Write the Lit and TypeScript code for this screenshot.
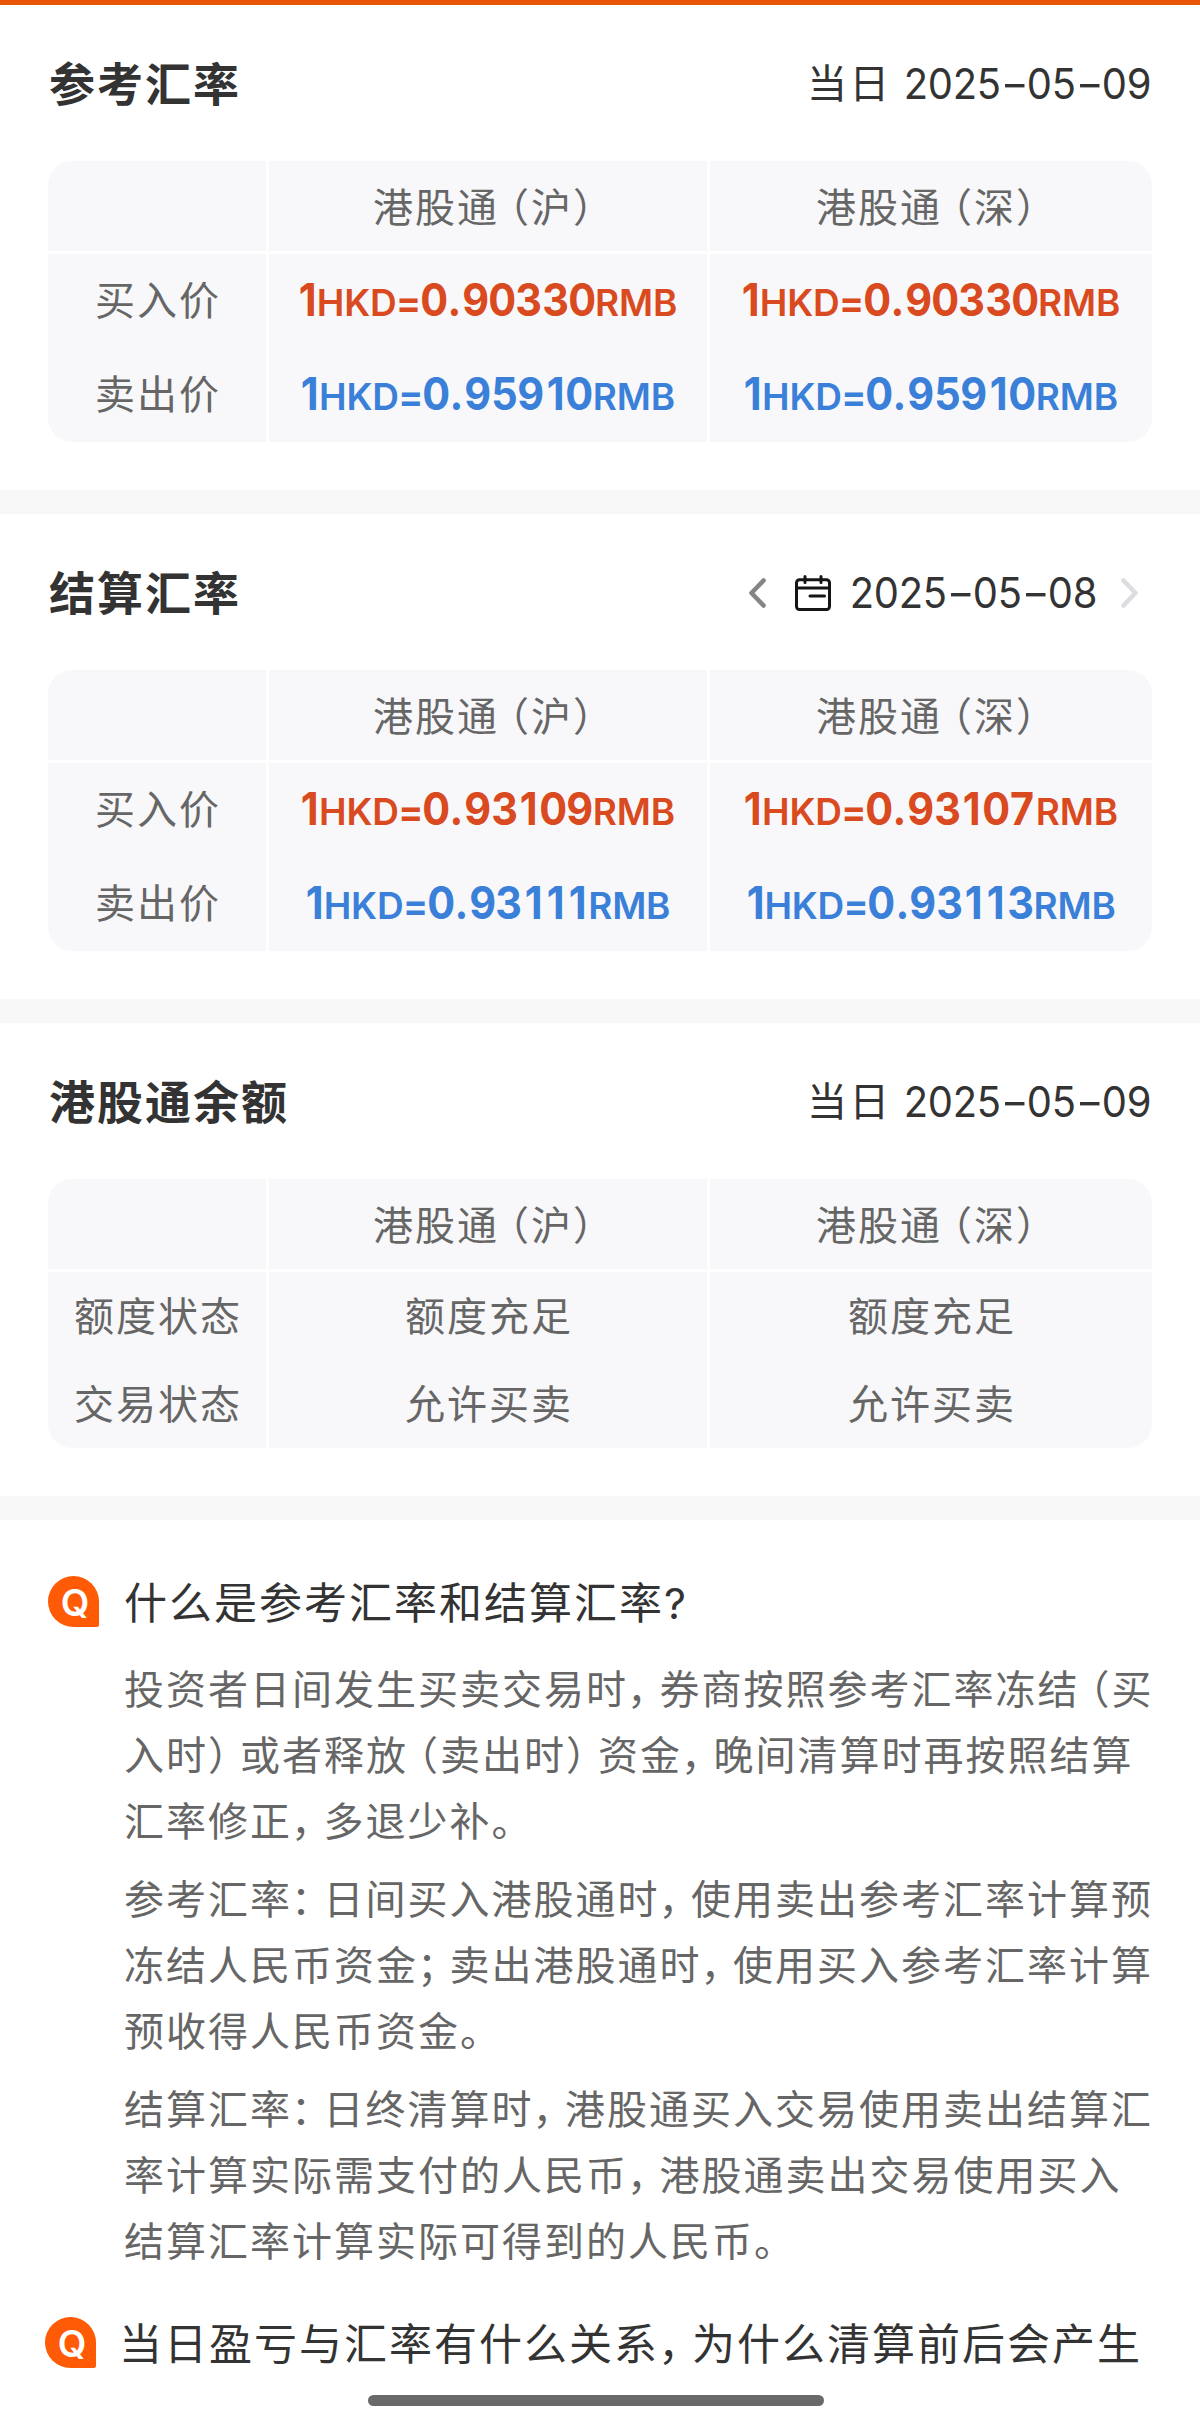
import { LitElement, html, css, svg } from "lit";
import { customElement, property } from "lit/decorators.js";

type Rate = { value: string; tone: "buy" | "sell" };
type Cell = string | Rate;
type Row = { label: string; cells: Cell[] };

const fontStack = css`"Inter", "Noto Sans CJK SC", sans-serif`;

/** Tightens full-width punctuation so that it takes about three quarters of a cell. */
const typeset = (text: string) =>
  text.split(/([（，：；。）])/).map((part) => {
    if (part === "（") return html`<span class="open">${part}</span>`;
    if (part === "）" || part === "。") return html`<span class="close">${part}</span>`;
    if (part.length === 1 && "，：；".includes(part)) return html`<span class="mid">${part}</span>`;
    return part;
  });

const shared = css`
  * { box-sizing: border-box; }
  .open, .close, .mid { font-feature-settings: "halt"; }
  .open { margin-left: 10px; }
  .close { margin-right: 10px; }
  .mid { margin-left: -1px; margin-right: 10.5px; }
`;

@customElement("date-text")
class DateText extends LitElement {
  @property() value = "";
  static styles = css`
    :host { display: flex; color: #333; font: 400 42px/60px ${fontStack}; letter-spacing: 0; white-space: nowrap; }
    .num { width: 24.4px; display: flex; justify-content: center; }
    .num span { transform: scaleX(0.95); }
    .dash { width: 26px; display: flex; justify-content: center; }
    .dash span { transform: scaleX(1.45); }
  `;
  render() {
    return [...this.value].map((c) => html`<span class=${c === "-" ? "dash" : "num"}><span>${c}</span></span>`);
  }
}

@customElement("rate-text")
class RateText extends LitElement {
  @property() value = "";
  @property() tone = "buy";
  static styles = css`
    :host { display: block; font: 700 45px/60px ${fontStack}; letter-spacing: 0; white-space: nowrap; }
    .rate { display: flex; align-items: baseline; }
    .buy { color: #d94a20; }
    .sell { color: #3b80d8; }
    .digit { width: 26.6px; display: flex; justify-content: center; }
    .digit span { transform: scaleX(0.92); }
    .digit.one { width: 22px; }
    .digit.lead { width: 18px; }
    .digit.dot { width: 15px; }
    .unit { font-size: 37px; font-weight: 600; letter-spacing: -0.2px; }
    .equals { width: 24px; font-size: 37px; font-weight: 700; display: flex; justify-content: center; }
  `;
  render() {
    return html`<span class="rate ${this.tone}"
      ><span class="digit lead"><span>1</span></span><span class="unit">HKD</span><span class="equals">=</span>${[...this.value].map(
        (c) => html`<span class="digit ${c === "1" ? "one" : c === "." ? "dot" : ""}"><span>${c}</span></span>`
      )}<span class="unit">RMB</span></span>`;
  }
}

@customElement("quote-table")
class QuoteTable extends LitElement {
  @property({ attribute: false }) rows: Row[] = [];
  @property({ type: Boolean, reflect: true }) compact = false;
  static styles = [
    shared,
    css`
      :host { display: block; color: #666; font: 400 40px/60px ${fontStack}; letter-spacing: 2px; }
      .table { display: grid; grid-template-columns: 218px 438px 442px; column-gap: 3px; border-radius: 24px; overflow: hidden; }
      .cell { height: 94px; background: #f8f8fa; display: flex; align-items: center; justify-content: center; white-space: nowrap; }
      .cell > span { display: block; padding: 0 0 0 2px; }
      .head > span, :host([compact]) .cell > span { padding-top: 2px; }
      :host([compact]) .cell { height: 88px; }
      .cell.head, :host([compact]) .cell.head { height: 90px; margin-bottom: 3px; padding-top: 2px; }
    `,
  ];
  render() {
    return html`<div class="table">
      <div class="cell head"></div>
      ${["港股通（沪）", "港股通（深）"].map((t) => html`<div class="cell head"><span>${typeset(t)}</span></div>`)}
      ${this.rows.map(
        (r) => html`<div class="cell"><span>${r.label}</span></div>
          ${r.cells.map((c) => html`<div class="cell">${typeof c === "string"
            ? html`<span>${c}</span>`
            : html`<rate-text .value=${c.value} .tone=${c.tone}></rate-text>`}</div>`)}`
      )}
    </div>`;
  }
}

@customElement("faq-item")
class FaqItem extends LitElement {
  @property() question = "";
  @property({ attribute: false }) answer: string[][] = [];
  static styles = [
    shared,
    css`
      :host { display: block; font-family: ${fontStack}; white-space: nowrap; }
      .question { display: flex; align-items: center; height: 66px; margin-bottom: 21px; color: #333; font-size: 43px; line-height: 66px; letter-spacing: 2px; }
      .badge { flex: none; width: 51px; height: 51px; margin: 0 25px 3px 0; }
      :host(.shifted) .badge { margin-right: 23px; }
      .answer { margin: 0 0 0 76px; color: #666; font-size: 40px; line-height: 66px; letter-spacing: 2px; }
      .answer + .answer { margin-top: 12px; }
      .line { display: block; }
      .letter { font: 600 37px "Inter", sans-serif; letter-spacing: 0; }
    `,
  ];
  render() {
    return html`<div class="question">
        <svg class="badge" viewBox="0 0 51 51">
          <path d="M25.5 0A25.5 25.5 0 0 1 51 25.5V48.5A2.5 2.5 0 0 1 48.5 51H25.5A25.5 25.5 0 0 1 25.5 0Z" fill="#ff5a05" />
          ${svg`<text class="letter" x="27" y="39.5" text-anchor="middle" fill="#fff">Q</text>`}
        </svg>
        <span>${typeset(this.question)}</span>
      </div>
      ${this.answer.map((p) => html`<p class="answer">${p.map((l) => html`<span class="line">${typeset(l)}</span>`)}</p>`)}`;
  }
}

@customElement("app-root")
class AppRoot extends LitElement {
  static styles = [
    shared,
    css`
      :host { display: block; position: relative; width: 1200px; height: 2424px; overflow: hidden; background: #fff; font-family: ${fontStack}; }
      .topbar { height: 5px; background: #e95506; }
      .section { padding: 0 48px 48px; border-bottom: 24px solid #f8f8f9; }
      .header { height: 156px; padding-top: 2px; display: flex; align-items: center; justify-content: space-between; color: #333; }
      .title { margin: 0; padding-left: 1px; font-size: 46px; line-height: 60px; font-weight: 700; letter-spacing: 2px; }
      .side { display: flex; align-items: center; font-size: 40px; line-height: 60px; letter-spacing: 2.5px; }
      .side .day { margin-right: 12px; }
      .side .day + date-text { margin-right: 1px; }
      .prev { width: 17px; height: 30px; margin-right: 29px; }
      .cal { width: 36px; height: 36px; margin-right: 19px; }
      .next { width: 17px; height: 30px; margin: 0 14px 0 24px; }
      .faq { padding: 50px 48px 0; }
      .faq-item { margin-bottom: 36px; }
      .shifted { margin-left: -3px; }
      .home { position: absolute; left: 368px; top: 2395px; width: 456px; height: 11px; border-radius: 5.5px; background: #696969; }
    `,
  ];

  private rates(buy: [string, string], sell: [string, string]): Row[] {
    return [
      { label: "买入价", cells: buy.map((value) => ({ value, tone: "buy" as const })) },
      { label: "卖出价", cells: sell.map((value) => ({ value, tone: "sell" as const })) },
    ];
  }

  render() {
    return html`
      <div class="topbar"></div>
      <section class="section">
        <div class="header">
          <h2 class="title">参考汇率</h2>
          <div class="side"><span class="day">当日</span><date-text value="2025-05-09"></date-text></div>
        </div>
        <quote-table .rows=${this.rates(["0.90330", "0.90330"], ["0.95910", "0.95910"])}></quote-table>
      </section>
      <section class="section">
        <div class="header">
          <h2 class="title">结算汇率</h2>
          <div class="side">
            <svg class="prev" viewBox="0 0 17 30" fill="none" stroke="#858585" stroke-width="4.6" stroke-linecap="round" stroke-linejoin="round"><path d="M14.5 2.5 2.5 15l12 12.5" /></svg>
            <svg class="cal" viewBox="0 0 36 36" fill="none" stroke="#151515" stroke-width="3" stroke-linecap="round"><rect x="1.5" y="4.8" width="33" height="29.7" rx="3" /><path d="M1.5 13h33M10 1.5v6M26 1.5v6M15 21h14.5" /></svg>
            <date-text value="2025-05-08"></date-text>
            <svg class="next" viewBox="0 0 17 30" fill="none" stroke="#dcdde1" stroke-width="4.6" stroke-linecap="round" stroke-linejoin="round"><path d="M2.5 2.5 14.5 15l-12 12.5" /></svg>
          </div>
        </div>
        <quote-table .rows=${this.rates(["0.93109", "0.93107"], ["0.93111", "0.93113"])}></quote-table>
      </section>
      <section class="section">
        <div class="header">
          <h2 class="title">港股通余额</h2>
          <div class="side"><span class="day">当日</span><date-text value="2025-05-09"></date-text></div>
        </div>
        <quote-table compact .rows=${[
          { label: "额度状态", cells: ["额度充足", "额度充足"] },
          { label: "交易状态", cells: ["允许买卖", "允许买卖"] },
        ]}></quote-table>
      </section>
      <section class="faq">
        <faq-item class="faq-item" question="什么是参考汇率和结算汇率?" .answer=${[
          ["投资者日间发生买卖交易时，券商按照参考汇率冻结（买", "入时）或者释放（卖出时）资金，晚间清算时再按照结算", "汇率修正，多退少补。"],
          ["参考汇率：日间买入港股通时，使用卖出参考汇率计算预", "冻结人民币资金；卖出港股通时，使用买入参考汇率计算", "预收得人民币资金。"],
          ["结算汇率：日终清算时，港股通买入交易使用卖出结算汇", "率计算实际需支付的人民币，港股通卖出交易使用买入", "结算汇率计算实际可得到的人民币。"],
        ]}></faq-item>
        <faq-item class="faq-item shifted" question="当日盈亏与汇率有什么关系，为什么清算前后会产生"></faq-item>
      </section>
      <div class="home"></div>
    `;
  }
}
